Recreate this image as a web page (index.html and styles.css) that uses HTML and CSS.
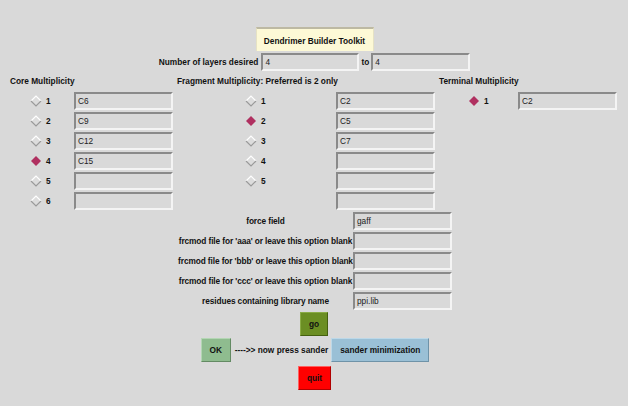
FILE: index.html
```html
<!DOCTYPE html>
<html>
<head>
<meta charset="utf-8">
<link rel="stylesheet" href="styles.css">
</head>
<body>
<div class="app">
  <div class="title-row"><div class="title">Dendrimer Builder Toolkit</div></div>

  <div class="layers-row">
    <span class="lbl">Number of layers desired</span>
    <div class="entry e-from">4</div>
    <span class="lbl to">to</span>
    <div class="entry e-to">4</div>
  </div>

  <div class="cols">
    <div class="col col-core">
      <div class="hdr">Core Multiplicity</div>
      <div class="row"><span class="radio"><svg class="dia" viewBox="0 0 12 12"><polygon class="d-fill" points="6,1 11,6 6,11 1,6"/><polyline class="d-hi" points="1,6 6,1 11,6"/><polyline class="d-lo" points="1,6 6,11 11,6"/></svg><b>1</b></span><div class="entry">C6</div></div>
      <div class="row"><span class="radio"><svg class="dia" viewBox="0 0 12 12"><polygon class="d-fill" points="6,1 11,6 6,11 1,6"/><polyline class="d-hi" points="1,6 6,1 11,6"/><polyline class="d-lo" points="1,6 6,11 11,6"/></svg><b>2</b></span><div class="entry">C9</div></div>
      <div class="row"><span class="radio"><svg class="dia" viewBox="0 0 12 12"><polygon class="d-fill" points="6,1 11,6 6,11 1,6"/><polyline class="d-hi" points="1,6 6,1 11,6"/><polyline class="d-lo" points="1,6 6,11 11,6"/></svg><b>3</b></span><div class="entry">C12</div></div>
      <div class="row"><span class="radio"><svg class="dia" viewBox="0 0 12 12"><polygon class="d-sel" points="6,1 11,6 6,11 1,6"/></svg><b>4</b></span><div class="entry">C15</div></div>
      <div class="row"><span class="radio"><svg class="dia" viewBox="0 0 12 12"><polygon class="d-fill" points="6,1 11,6 6,11 1,6"/><polyline class="d-hi" points="1,6 6,1 11,6"/><polyline class="d-lo" points="1,6 6,11 11,6"/></svg><b>5</b></span><div class="entry"></div></div>
      <div class="row"><span class="radio"><svg class="dia" viewBox="0 0 12 12"><polygon class="d-fill" points="6,1 11,6 6,11 1,6"/><polyline class="d-hi" points="1,6 6,1 11,6"/><polyline class="d-lo" points="1,6 6,11 11,6"/></svg><b>6</b></span><div class="entry"></div></div>
    </div>

    <div class="col col-frag">
      <div class="hdr">Fragment Multiplicity: Preferred is 2 only</div>
      <div class="row"><span class="radio"><svg class="dia" viewBox="0 0 12 12"><polygon class="d-fill" points="6,1 11,6 6,11 1,6"/><polyline class="d-hi" points="1,6 6,1 11,6"/><polyline class="d-lo" points="1,6 6,11 11,6"/></svg><b>1</b></span><div class="entry">C2</div></div>
      <div class="row"><span class="radio"><svg class="dia" viewBox="0 0 12 12"><polygon class="d-sel" points="6,1 11,6 6,11 1,6"/></svg><b>2</b></span><div class="entry">C5</div></div>
      <div class="row"><span class="radio"><svg class="dia" viewBox="0 0 12 12"><polygon class="d-fill" points="6,1 11,6 6,11 1,6"/><polyline class="d-hi" points="1,6 6,1 11,6"/><polyline class="d-lo" points="1,6 6,11 11,6"/></svg><b>3</b></span><div class="entry">C7</div></div>
      <div class="row"><span class="radio"><svg class="dia" viewBox="0 0 12 12"><polygon class="d-fill" points="6,1 11,6 6,11 1,6"/><polyline class="d-hi" points="1,6 6,1 11,6"/><polyline class="d-lo" points="1,6 6,11 11,6"/></svg><b>4</b></span><div class="entry"></div></div>
      <div class="row"><span class="radio"><svg class="dia" viewBox="0 0 12 12"><polygon class="d-fill" points="6,1 11,6 6,11 1,6"/><polyline class="d-hi" points="1,6 6,1 11,6"/><polyline class="d-lo" points="1,6 6,11 11,6"/></svg><b>5</b></span><div class="entry"></div></div>
      <div class="row"><span class="radio"></span><div class="entry"></div></div>
    </div>

    <div class="col col-term">
      <div class="hdr">Terminal Multiplicity</div>
      <div class="row"><span class="radio"><svg class="dia" viewBox="0 0 12 12"><polygon class="d-sel" points="6,1 11,6 6,11 1,6"/></svg><b>1</b></span><div class="entry">C2</div></div>
    </div>
  </div>

  <div class="opts">
    <span class="olbl">force field</span><div class="entry">gaff</div>
    <span class="olbl">frcmod file for 'aaa' or leave this option blank</span><div class="entry"></div>
    <span class="olbl">frcmod file for 'bbb' or leave this option blank</span><div class="entry"></div>
    <span class="olbl">frcmod file for 'ccc' or leave this option blank</span><div class="entry"></div>
    <span class="olbl">residues containing library name</span><div class="entry">ppi.lib</div>
  </div>

  <div class="btn-row"><button class="btn go">go</button></div>
  <div class="btn-row ok-row">
    <button class="btn ok">OK</button>
    <span class="lbl arrow">----&gt;&gt; now press sander</span>
    <button class="btn sander">sander minimization</button>
  </div>
  <div class="btn-row quit-row"><button class="btn quit">quit</button></div>
</div>
</body>
</html>
```

FILE: styles.css
```css
html, body {
  margin: 0;
  padding: 0;
  background: #d9d9d9;
}
body {
  font-family: "Liberation Sans", Arial, sans-serif;
  font-size: 8.3px;
  color: #111;
  width: 628px;
  height: 406px;
  overflow: hidden;
}
.app {
  padding-top: 27px;
  display: flex;
  flex-direction: column;
}
.lbl, .hdr, .olbl, .radio b, .btn, .title {
  font-weight: bold;
}
.title-row {
  display: flex;
  justify-content: center;
  padding-left: 1px;
}
.title {
  width: 118px;
  height: 24px;
  box-sizing: border-box;
  background: #fdf9d6;
  border-top: 2px solid #bdb9a3;
  border-left: 1px solid #e6e2c4;
  border-right: 1px solid #e6e2c4;
  display: flex;
  align-items: center;
  justify-content: center;
  padding-top: 1px;
}
.layers-row {
  display: flex;
  align-items: center;
  justify-content: center;
  margin-top: 2px;
  height: 18px;
  padding-left: 1px;
}
.layers-row .lbl { margin-right: 3px; }
.layers-row .to { margin: 0 2px 0 2px; }
.entry {
  box-sizing: border-box;
  width: 99px;
  height: 18px;
  border: 2px solid;
  border-color: #8a8a8a #f4f4f4 #f4f4f4 #8a8a8a;
  background: #d9d9d9;
  padding-left: 2px;
  line-height: 14px;
  font-weight: normal;
  color: #222;
  white-space: nowrap;
  overflow: hidden;
}
.e-from { width: 98px; }
.e-to { width: 99px; }

.cols {
  display: flex;
  height: 141px;
}
.col { display: flex; flex-direction: column; }
.hdr {
  height: 21px;
  line-height: 10px;
  padding-top: 5px;
  box-sizing: border-box;
  white-space: nowrap;
}
.row {
  display: flex;
  align-items: center;
  height: 20px;
}
.row .entry { margin-bottom: 2px; }
.radio {
  display: flex;
  align-items: center;
  height: 18px;
  margin-bottom: 2px;
}
.radio b { margin-left: 4px; }
.dia { width: 12px; height: 12px; display: block; }
.d-fill { fill: #dcdcdc; }
.d-hi { fill: none; stroke: #ffffff; stroke-width: 1.2; }
.d-lo { fill: none; stroke: #9a9a9a; stroke-width: 1.2; }
.d-sel { fill: #b03060; }

.col-core { width: 177px; }
.col-core .hdr { padding-left: 10px; }
.col-core .row { padding-left: 30px; }
.col-core .radio { width: 44px; }

.col-frag { width: 262px; }
.col-frag .row { padding-left: 68px; }
.col-frag .radio { width: 91px; }

.col-term { width: 180px; }
.col-term .row { padding-left: 29px; }
.col-term .radio { width: 50px; }

.opts {
  display: grid;
  grid-template-columns: 175px 99px;
  grid-auto-rows: 20px;
  justify-content: center;
  padding-left: 2px;
  height: 100px;
}
.olbl {
  text-align: center;
  line-height: 18px;
  white-space: nowrap;
  letter-spacing: -0.1px;
}
.opts .entry { margin-bottom: 2px; }

.btn-row {
  display: flex;
  justify-content: center;
  align-items: center;
}
.btn {
  font-family: "Liberation Sans", Arial, sans-serif;
  font-size: 8.3px;
  margin: 0;
  padding: 0;
  height: 24px;
  box-sizing: border-box;
  border: 1px solid;
  color: #111;
  display: flex;
  align-items: center;
  justify-content: center;
}
.go {
  width: 28px;
  background: #6b8e23;
  border-color: #89ab45 #45600f #45600f #89ab45;
}
.ok-row { margin-top: 2px; padding-left: 2px; }
.ok {
  width: 30px;
  background: #8fbc8f;
  border-color: #b3d6b3 #638a63 #638a63 #b3d6b3;
}
.arrow { margin: 0 3px 0 4px; }
.sander {
  width: 98px;
  background: #9ac0d6;
  border-color: #bcd8e8 #6f93a8 #6f93a8 #bcd8e8;
}
.quit-row { margin-top: 4px; padding-left: 1px; }
.quit {
  width: 33px;
  background: #ff0000;
  border-color: #ff6060 #b00000 #b00000 #ff6060;
}
```
